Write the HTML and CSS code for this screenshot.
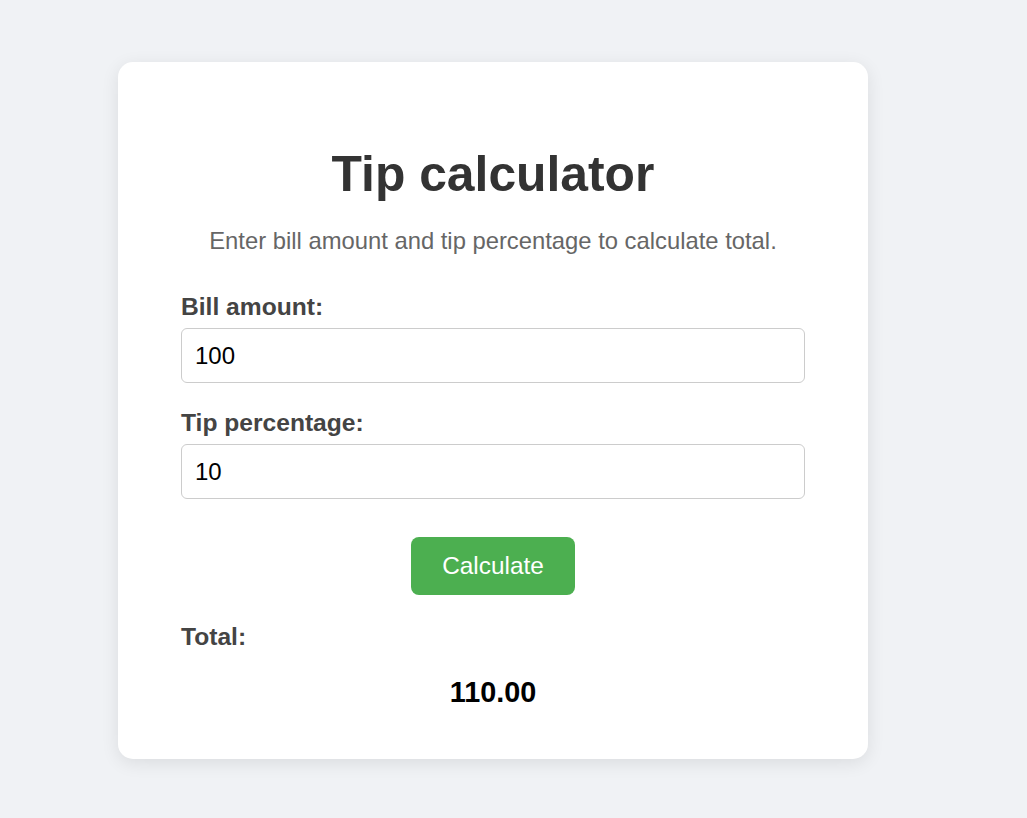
FILE: index.html
```html
<!DOCTYPE html>
<html lang="en">
<head>
<meta charset="utf-8">
<title>Tip calculator</title>
<link rel="stylesheet" href="styles.css">
</head>
<body>
  <main class="card">
    <h1 class="title">Tip calculator</h1>
    <p class="subtitle">Enter bill amount and tip percentage to calculate total.</p>
    <form class="form">
      <div class="field">
        <label class="label" for="bill">Bill amount:</label>
        <input class="input" id="bill" type="text" value="100">
      </div>
      <div class="field">
        <label class="label" for="tip">Tip percentage:</label>
        <input class="input" id="tip" type="text" value="10">
      </div>
      <div class="actions">
        <button class="button" type="button">Calculate</button>
      </div>
    </form>
    <div class="total-label">Total:</div>
    <div class="total-value">110.00</div>
  </main>
</body>
</html>
```

FILE: styles.css
```css
* { box-sizing: border-box; }

body {
  margin: 0;
  padding: 62px 0 0 118px;
  background: #f0f2f5;
  font-family: "Liberation Sans", Arial, sans-serif;
  min-height: 818px;
}

.card {
  width: 750px;
  background: #ffffff;
  border-radius: 15px;
  box-shadow: 0 4px 18px rgba(0, 0, 0, 0.09);
  padding: 84px 63px 50px;
}

.title {
  margin: 0;
  text-align: center;
  font-size: 49.8px;
  font-weight: bold;
  color: #333333;
  line-height: 57px;
}

.subtitle {
  margin: 24px 0 0;
  text-align: center;
  font-size: 23.8px;
  line-height: 28px;
  color: #666666;
}

.form {
  margin-top: 38px;
  display: flex;
  flex-direction: column;
  gap: 26px;
}

.field {
  display: flex;
  flex-direction: column;
  gap: 7px;
}

.label {
  font-size: 24.6px;
  line-height: 28px;
  font-weight: bold;
  color: #444444;
}

.input {
  width: 100%;
  height: 55px;
  border: 1px solid #cccccc;
  border-radius: 6px;
  padding: 0 13px;
  font-family: "Liberation Sans", Arial, sans-serif;
  font-size: 24px;
  color: #000000;
  background: #ffffff;
  outline: none;
}

.actions {
  display: flex;
  justify-content: center;
  margin-top: 12px;
}

.button {
  width: 164px;
  height: 58px;
  border: none;
  border-radius: 8px;
  background: #4caf50;
  color: #ffffff;
  font-family: "Liberation Sans", Arial, sans-serif;
  font-size: 24.4px;
  cursor: pointer;
}

.total-label {
  margin-top: 28px;
  font-size: 24.6px;
  line-height: 28px;
  font-weight: bold;
  color: #444444;
}

.total-value {
  margin-top: 25px;
  text-align: center;
  font-size: 28.8px;
  line-height: 33px;
  font-weight: bold;
  color: #000000;
}
```
